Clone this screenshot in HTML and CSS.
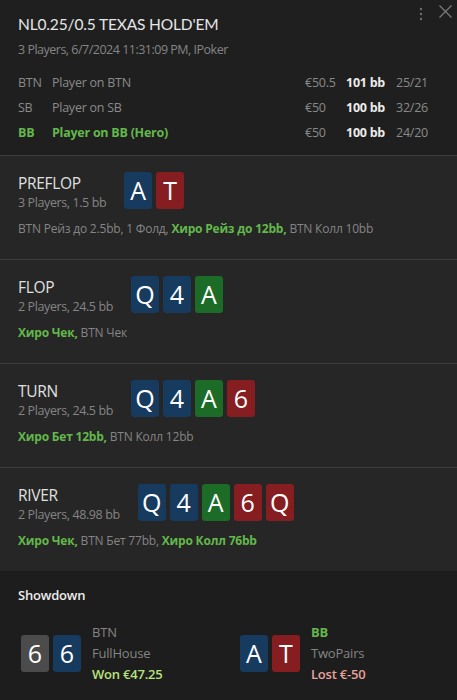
FILE: index.html
```html
<!DOCTYPE html>
<html>
<head>
<meta charset="utf-8">
<link rel="stylesheet" href="styles.css">
</head>
<body>
<div class="panel">
  <header class="header">
    <div class="controls">
      <svg class="dots" width="4" height="14" viewBox="0 0 4 14"><circle cx="2" cy="2" r="1.2"/><circle cx="2" cy="7" r="1.2"/><circle cx="2" cy="12" r="1.2"/></svg>
      <svg class="close" width="13" height="13" viewBox="0 0 13 13"><path d="M0.5 0.5 L12.5 12.5 M12.5 0.5 L0.5 12.5"/></svg>
    </div>
    <h1 class="title">NL0.25/0.5 TEXAS HOLD'EM</h1>
    <div class="subtitle">3 Players, 6/7/2024 11:31:09 PM, IPoker</div>
    <div class="players">
      <div class="prow">
        <span>BTN</span><span>Player on BTN</span><span>€50.5</span><span class="bb">101 bb</span><span>25/21</span>
      </div>
      <div class="prow">
        <span>SB</span><span>Player on SB</span><span>€50</span><span class="bb">100 bb</span><span>32/26</span>
      </div>
      <div class="prow hero">
        <span>BB</span><span>Player on BB (Hero)</span><span class="amt">€50</span><span class="bb">100 bb</span><span class="amt">24/20</span>
      </div>
    </div>
  </header>

  <section class="street">
    <div class="street-top">
      <div class="street-info">
        <div class="street-name">PREFLOP</div>
        <div class="street-sub">3 Players, 1.5 bb</div>
      </div>
      <div class="cards">
        <span class="card blue">A</span><span class="card red">T</span>
      </div>
    </div>
    <div class="actions">BTN Рейз до 2.5bb, 1 Фолд, <b class="me">Хиро Рейз до 12bb,</b> BTN Колл 10bb</div>
  </section>

  <section class="street">
    <div class="street-top">
      <div class="street-info">
        <div class="street-name">FLOP</div>
        <div class="street-sub">2 Players, 24.5 bb</div>
      </div>
      <div class="cards">
        <span class="card blue">Q</span><span class="card blue">4</span><span class="card green">A</span>
      </div>
    </div>
    <div class="actions"><b class="me">Хиро Чек,</b> BTN Чек</div>
  </section>

  <section class="street">
    <div class="street-top">
      <div class="street-info">
        <div class="street-name">TURN</div>
        <div class="street-sub">2 Players, 24.5 bb</div>
      </div>
      <div class="cards">
        <span class="card blue">Q</span><span class="card blue">4</span><span class="card green">A</span><span class="card red">6</span>
      </div>
    </div>
    <div class="actions"><b class="me">Хиро Бет 12bb,</b> BTN Колл 12bb</div>
  </section>

  <section class="street">
    <div class="street-top">
      <div class="street-info">
        <div class="street-name">RIVER</div>
        <div class="street-sub">2 Players, 48.98 bb</div>
      </div>
      <div class="cards">
        <span class="card blue">Q</span><span class="card blue">4</span><span class="card green">A</span><span class="card red">6</span><span class="card red">Q</span>
      </div>
    </div>
    <div class="actions"><b class="me">Хиро Чек,</b> BTN Бет 77bb, <b class="me">Хиро Колл 76bb</b></div>
  </section>

  <section class="showdown">
    <div class="sd-title">Showdown</div>
    <div class="hands">
      <div class="hand">
        <div class="cards">
          <span class="card gray">6</span><span class="card blue">6</span>
        </div>
        <div class="hand-info">
          <div>BTN</div>
          <div>FullHouse</div>
          <div class="won">Won €47.25</div>
        </div>
      </div>
      <div class="hand">
        <div class="cards">
          <span class="card blue">A</span><span class="card red">T</span>
        </div>
        <div class="hand-info">
          <div class="me-plain">BB</div>
          <div>TwoPairs</div>
          <div class="lost">Lost €-50</div>
        </div>
      </div>
    </div>
  </section>
</div>
</body>
</html>
```

FILE: styles.css
```css
* { box-sizing: border-box; }
html, body {
  margin: 0;
  padding: 0;
  background: #1c1d1c;
}
body {
  font-family: "Open Sans", "Noto Sans", sans-serif;
  color: #8c8c8c;
  width: 457px;
  height: 700px;
  overflow: hidden;
}
.panel { width: 457px; }

.header {
  position: relative;
  background: #1f1f1f;
  padding: 12px 29px 10px 18px;
}
.controls {
  position: absolute;
  top: 5px;
  right: 5px;
  display: flex;
  align-items: flex-start;
  gap: 16px;
}
.dots { fill: #6e6e6e; margin-top: 2px; }
.close { stroke: #7a7a7a; stroke-width: 1.3; fill: none; }

.title {
  margin: 0;
  font-family: Lato, "Open Sans", sans-serif;
  font-size: 15.5px;
  font-weight: 400;
  line-height: 24px;
  color: #e6e6e6;
  letter-spacing: -0.15px;
}
.subtitle {
  margin-top: 4px;
  font-size: 12.5px;
  line-height: 20px;
  color: #858585;
  letter-spacing: -0.5px;
}
.players {
  margin-top: 10px;
}
.prow {
  display: grid;
  grid-template-columns: 34px 1fr 41px 50px 32px;
  height: 25px;
  align-items: center;
  font-size: 12.5px;
  color: #8a8a8a;
  letter-spacing: -0.25px;
  white-space: nowrap;
}
.prow .bb { color: #ececec; font-weight: 700; }
.prow.hero { color: #63b84c; font-weight: 700; }
.prow.hero .amt { color: #8a8a8a; font-weight: 400; }

.street {
  background: #252625;
  border-top: 1px solid #3b3c3b;
  height: 104px;
  padding: 16px 18px 0 18px;
}
.street-top {
  display: flex;
  align-items: flex-start;
  gap: 18px;
}
.street-name {
  font-size: 15.5px;
  line-height: 22px;
  color: #e0e0e0;
  letter-spacing: -0.3px;
}
.street-sub {
  font-size: 12.5px;
  line-height: 18px;
  color: #858585;
  letter-spacing: -0.4px;
}
.cards {
  display: flex;
  gap: 4px;
}
.card {
  width: 28px;
  height: 37px;
  border-radius: 3px;
  color: #ffffff;
  font-size: 25px;
  line-height: 37px;
  text-align: center;
  font-family: "Open Sans", "Noto Sans", sans-serif;
}
.card.blue { background: #173a5f; }
.card.red { background: #861d20; }
.card.green { background: #1c6c27; }
.card.gray { background: #4a4b4a; }

.actions {
  margin-top: 7px;
  font-size: 12px;
  line-height: 20px;
  color: #858585;
  letter-spacing: -0.2px;
  white-space: nowrap;
}
.me { color: #63b84c; font-weight: 700; }

.showdown {
  background: #1c1d1c;
  padding: 14px 18px 0 18px;
}
.sd-title {
  font-size: 13px;
  line-height: 20px;
  color: #ececec;
  font-weight: 600;
  letter-spacing: -0.2px;
}
.hands {
  display: flex;
  margin-top: 17px;
  padding-left: 3px;
}
.hand {
  flex: 0 0 219px;
  display: flex;
  align-items: center;
  gap: 11px;
}
.hand-info {
  font-size: 13px;
  line-height: 21px;
  color: #858585;
  letter-spacing: -0.2px;
  white-space: nowrap;
}
.won { color: #b9e27c; font-weight: 600; }
.lost { color: #e7a29c; font-weight: 600; }
.me-plain { color: #63b84c; font-weight: 700; }
```
